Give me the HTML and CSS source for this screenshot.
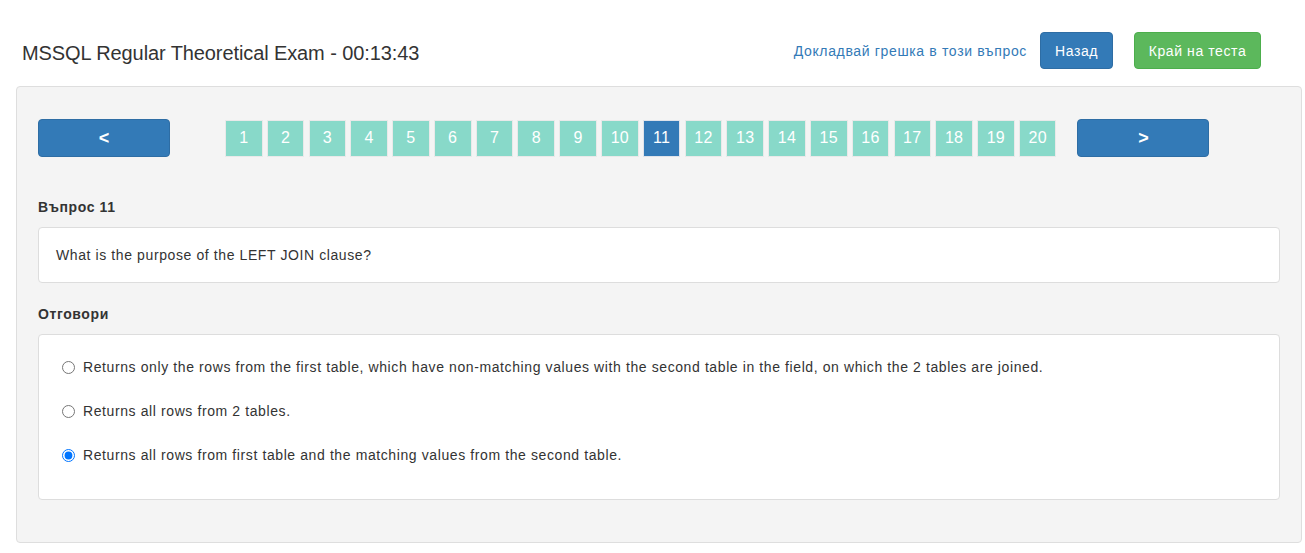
FILE: index.html
```html
<!DOCTYPE html>
<html lang="bg">
<head>
<meta charset="utf-8">
<title>MSSQL Regular Theoretical Exam</title>
<link rel="stylesheet" href="styles.css">
</head>
<body>
<header class="top">
  <h1 class="title">MSSQL Regular Theoretical Exam - 00:13:43</h1>
  <div class="actions">
    <a class="report" href="#">Докладвай грешка в този въпрос</a>
    <button class="btn btn-primary btn-back">Назад</button>
    <button class="btn btn-success btn-end">Край на теста</button>
  </div>
</header>
<main class="panel">
  <nav class="pager">
    <button class="nav-btn nav-prev">&lt;</button>
    <ol class="numbers">
      <li class="num">1</li><li class="num">2</li><li class="num">3</li><li class="num">4</li><li class="num">5</li>
      <li class="num">6</li><li class="num">7</li><li class="num">8</li><li class="num">9</li><li class="num">10</li>
      <li class="num active">11</li><li class="num">12</li><li class="num">13</li><li class="num">14</li><li class="num">15</li>
      <li class="num">16</li><li class="num">17</li><li class="num">18</li><li class="num">19</li><li class="num">20</li>
    </ol>
    <button class="nav-btn nav-next">&gt;</button>
  </nav>
  <h2 class="label label-question">Въпрос 11</h2>
  <div class="box question">What is the purpose of the LEFT JOIN clause?</div>
  <h2 class="label">Отговори</h2>
  <div class="box answers">
    <label class="answer"><input type="radio" name="a"><span>Returns only the rows from the first table, which have non-matching values with the second table in the field, on which the 2 tables are joined.</span></label>
    <label class="answer"><input type="radio" name="a"><span>Returns all rows from 2 tables.</span></label>
    <label class="answer"><input type="radio" name="a" checked><span>Returns all rows from first table and the matching values from the second table.</span></label>
  </div>
</main>
</body>
</html>
```
FILE: styles.css
```css
* { box-sizing: border-box; }
html, body { margin: 0; padding: 0; background: #fff; }
body {
  font-family: "Liberation Sans", Arial, Helvetica, sans-serif;
  font-size: 14px;
  line-height: 20px;
  letter-spacing: 0.6px;
  color: #333;
}
.top {
  display: flex;
  align-items: center;
  justify-content: space-between;
  padding: 32px 44px 0 22px;
  height: 69px;
}
.title {
  margin: 4px 0 0;
  font-size: 20px;
  font-weight: normal;
  line-height: 24px;
  letter-spacing: -0.1px;
  color: #333;
}
.actions {
  display: flex;
  align-items: center;
}
.report {
  color: #337ab7;
  text-decoration: none;
  margin-right: 13px;
  letter-spacing: 0.65px;
}
.btn {
  font-family: inherit;
  font-size: 14px;
  line-height: 20px;
  letter-spacing: 0.6px;
  height: 37px;
  padding: 7px 10px;
  border: 1px solid transparent;
  border-radius: 4px;
  color: #fff;
  cursor: pointer;
}
.btn-primary { background: #337ab7; border-color: #2e6da4; }
.btn-success { background: #5cb85c; border-color: #4cae4c; }
.btn-back { width: 73px; margin-right: 21px; }
.btn-end { width: 127px; }

.panel {
  margin: 17px 3px 10px 16px;
  background: #f4f4f4;
  border: 1px solid #dedede;
  border-radius: 4px;
  padding: 32px 21px 42px;
  height: 457px;
}
.pager {
  display: flex;
  align-items: center;
}
.nav-btn {
  width: 132px;
  height: 38px;
  background: #337ab7;
  border: 1px solid #2e6da4;
  border-radius: 4px;
  color: #fff;
  font-family: inherit;
  font-size: 18px;
  font-weight: bold;
  padding: 0;
}
.nav-prev { margin-right: 55px; }
.nav-next { margin-left: 21px; }
.numbers {
  list-style: none;
  margin: 0;
  padding: 0;
  display: flex;
  gap: 4.2px;
}
.num {
  width: 37.6px;
  height: 37px;
  background: #88d9c9;
  border: 1px solid #e9e9e9;
  color: #fff;
  font-size: 16px;
  letter-spacing: 0.3px;
  display: flex;
  align-items: center;
  justify-content: center;
}
.num.active {
  background: #337ab7;
  border-color: #dfe3ea;
}
.label {
  margin: 0 0 10px;
  font-size: 14px;
  line-height: 20px;
  font-weight: bold;
  color: #333;
}
.label-question { margin-top: 40px; }
.box {
  background: #fff;
  border: 1px solid #ddd;
  border-radius: 4px;
}
.question {
  padding: 17px 17px;
  height: 56px;
  margin-bottom: 21px;
}
.answers {
  margin-top: 0;
  padding: 22px 23px 22px;
  display: flex;
  flex-direction: column;
  gap: 24px;
  height: 166px;
}
.answer {
  display: flex;
  align-items: center;
  height: 20px;
}
.answer input {
  margin: 0 8px 0 0;
  width: 13px;
  height: 13px;
}
```
